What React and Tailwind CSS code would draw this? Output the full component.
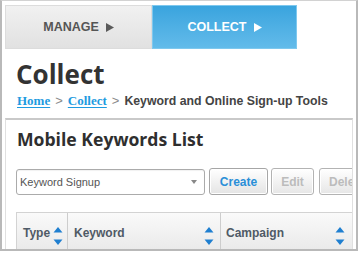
import React from "react";

const Tri = ({ color }) => (
  <svg width="8" height="9" viewBox="0 0 8 9" className="ml-[7px]">
    <polygon points="0,0 8,4.5 0,9" fill={color} />
  </svg>
);

const Sort = () => (
  <svg width="10" height="18" viewBox="0 0 10 18" className="mt-[6px] shrink-0">
    <polygon points="5,0 9.5,5.5 0.5,5.5" fill="#1f7fd0" />
    <polygon points="0.5,12.5 9.5,12.5 5,18" fill="#1f7fd0" />
  </svg>
);

export default function App() {
  const sans = { fontFamily: '"Liberation Sans", Arial, sans-serif' };
  const head = { fontFamily: '"Open Sans", "Liberation Sans", sans-serif' };
  const serif = { fontFamily: '"Liberation Serif", "Times New Roman", serif' };
  return (
    <div
      className="w-[358px] h-[251px] bg-white border-l-2 border-r-2 border-b-2 border-t border-l-[#b9b9b9] border-r-[#b9b9b9] border-b-[#b9b9b9] border-t-[#d2d2d2] flex flex-col overflow-hidden"
      style={sans}
    >
      {/* tabs */}
      <div className="flex ml-[3px] mt-[4px]">
        <div className="w-[147px] h-[44px] flex items-center justify-center bg-gradient-to-b from-[#f1f1f1] to-[#e1e1e1] border border-[#dcdcdc] text-[#555] font-bold text-[12.5px]">
          <span>MANAGE</span>
          <Tri color="#5a5a5a" />
        </div>
        <div className="w-[145px] h-[44px] flex items-center justify-center bg-gradient-to-b from-[#39a4de] to-[#62bbea] border border-[#7ec8ee] text-white font-bold text-[12.5px]">
          <span>COLLECT</span>
          <Tri color="#ffffff" />
        </div>
      </div>

      {/* title */}
      <div className="ml-[14px] mt-[12px] text-[26px] leading-[26px] font-bold text-[#333]" style={head}>
        Collect
      </div>

      {/* breadcrumb */}
      <div className="ml-[15px] mt-[6px] flex items-baseline leading-[16px] whitespace-nowrap">
        <a className="text-[13px] font-bold text-[#1e9be0] underline underline-offset-2" style={serif}>Home</a>
        <span className="text-[13px] text-[#8a8a8a] px-[5px]">&gt;</span>
        <a className="text-[13px] font-bold text-[#1e9be0] underline underline-offset-2" style={serif}>Collect</a>
        <span className="text-[13px] text-[#8a8a8a] px-[5px]">&gt;</span>
        <span className="text-[12.3px] font-bold text-[#444]">Keyword and Online Sign-up Tools</span>
      </div>

      {/* panel */}
      <div className="ml-[3px] mt-[9px] w-[348px] flex-1 min-h-0 overflow-hidden border-t-2 border-t-[#c9c9c9] border-x border-x-[#e0e0e0] bg-white">
        <div className="ml-[11px] mt-[8px] text-[17.6px] leading-[22px] font-bold text-[#2f2f2f] whitespace-nowrap" style={head}>
          Mobile Keywords List
        </div>

        <div className="ml-[10px] mt-[18px] flex w-max items-start gap-[4px] whitespace-nowrap">
          <div className="shrink-0 mt-[1px] w-[189px] h-[26px] border border-[#ababab] rounded-[3px] bg-white flex items-center justify-between pl-[3px] pr-[7px] shadow-[inset_0_1px_1px_rgba(0,0,0,0.06)]">
            <span className="text-[11px] text-[#555]">Keyword Signup</span>
            <svg width="6" height="4" viewBox="0 0 6 4">
              <polygon points="0,0 6,0 3,4" fill="#888" />
            </svg>
          </div>
          <button className="shrink-0 h-[27px] w-[59px] border border-[#a6a6a6] rounded-[3px] bg-gradient-to-b from-[#ffffff] to-[#e4e4e4] shadow-[inset_0_0_0_1px_#ffffff] text-[12px] font-bold text-[#2a8fd8] flex items-center justify-center">
            Create
          </button>
          <button className="shrink-0 ml-[-1px] h-[27px] w-[43px] border border-[#b3b3b3] rounded-[3px] bg-gradient-to-b from-[#ffffff] to-[#e6e6e6] shadow-[inset_0_0_0_1px_#ffffff] text-[12px] font-bold text-[#bcbcbc] flex items-center justify-center">
            Edit
          </button>
          <button className="shrink-0 ml-[1px] h-[27px] w-[56px] border border-[#b3b3b3] rounded-[3px] bg-gradient-to-b from-[#ffffff] to-[#e6e6e6] shadow-[inset_0_0_0_1px_#ffffff] text-[12px] font-bold text-[#bcbcbc] flex items-center justify-center">
            Delete
          </button>
        </div>

        <div className="ml-[10px] mt-[17px] flex h-[40px] border-t border-l border-[#d3d3d3] bg-gradient-to-b from-[#fafafa] to-[#e9e9e9] text-[12px] font-bold text-[#4f5a66] leading-[14px]">
          <div className="w-[51px] flex items-center justify-between pl-[6px] pr-[4px] border-r border-[#cdcdcd]">
            <span>Type</span>
            <Sort />
          </div>
          <div className="w-[153px] flex items-center justify-between pl-[6px] pr-[6px] border-r border-[#cdcdcd]">
            <span>Keyword</span>
            <Sort />
          </div>
          <div className="flex-1 flex items-center justify-between pl-[5px] pr-[7px]">
            <span>Campaign</span>
            <Sort />
          </div>
        </div>
      </div>
    </div>
  );
}
